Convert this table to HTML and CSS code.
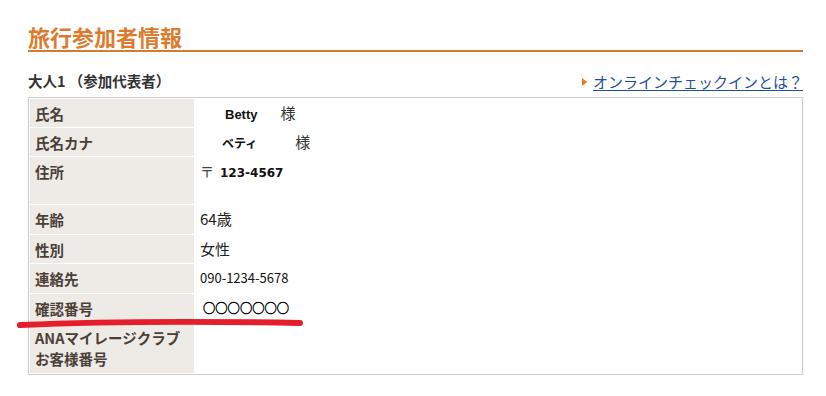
FILE: index.html
```html
<!DOCTYPE html>
<html lang="ja">
<head>
<meta charset="utf-8">
<title>旅行参加者情報</title>
<link rel="stylesheet" href="styles.css">
</head>
<body>
<div class="page">
  <h1 class="title">旅行参加者情報</h1>
  <div class="section-head">
    <h2 class="section-title">大人1 （参加代表者）</h2>
    <a class="help-link" href="#"><span class="arrow"></span><span class="link-text">オンラインチェックインとは？</span></a>
  </div>
  <table class="info">
    <tr class="r28">
      <th>氏名</th>
      <td><span class="name-latin">Betty</span><span class="sama sama-1">様</span></td>
    </tr>
    <tr class="r28">
      <th>氏名カナ</th>
      <td><span class="name-kana">ベティ</span><span class="sama sama-2">様</span></td>
    </tr>
    <tr class="r47">
      <th>住所</th>
      <td><span class="postal-mark">〒</span><span class="postal">123-4567</span></td>
    </tr>
    <tr class="r29">
      <th>年齢</th>
      <td class="v15">64歳</td>
    </tr>
    <tr class="r28">
      <th>性別</th>
      <td class="v15">女性</td>
    </tr>
    <tr class="r29">
      <th>連絡先</th>
      <td class="v13">090-1234-5678</td>
    </tr>
    <tr class="r28">
      <th>確認番号</th>
      <td class="circles">○○○○○○○</td>
    </tr>
    <tr class="r50 last">
      <th class="two-line">ANAマイレージクラブ<br>お客様番号</th>
      <td></td>
    </tr>
  </table>
  <svg class="mark" width="300" height="14" viewBox="0 0 300 14" aria-hidden="true">
    <path d="M4 8 Q120 3 284 6" fill="none" stroke="#e41e2b" stroke-width="6" stroke-linecap="round"/>
  </svg>
</div>
</body>
</html>
```
FILE: styles.css
```css
html, body {
  margin: 0;
  padding: 0;
  background: #ffffff;
}

body {
  font-family: "Noto Sans CJK JP", "Noto Sans", sans-serif;
  color: #333333;
}

.page {
  position: relative;
  width: 775px;
  padding: 22px 0 0 28px;
}

.title {
  margin: 0;
  font-size: 22px;
  line-height: 28px;
  font-weight: 700;
  color: #dc7b2c;
  border-bottom: 2px solid #d9792b;
}

.section-head {
  display: flex;
  justify-content: space-between;
  align-items: center;
  margin-top: 18px;
  height: 22px;
  margin-bottom: 5px;
}

.section-title {
  margin: 0;
  font-size: 14.5px;
  line-height: 22px;
  font-weight: 700;
  color: #333333;
}

.help-link {
  display: flex;
  align-items: center;
  text-decoration: none;
  color: #1d4f9e;
  margin-top: 2px;
}

.arrow {
  width: 0;
  height: 0;
  border-top: 4px solid transparent;
  border-bottom: 4px solid transparent;
  border-left: 5px solid #e8771e;
  margin-right: 6px;
}

.link-text {
  font-size: 15px;
  line-height: 20px;
  text-decoration: underline;
  text-underline-offset: 2px;
}

.info {
  width: 775px;
  border: 1px solid #cccccc;
  border-spacing: 0;
  padding: 1px;
  box-sizing: border-box;
}

.info th,
.info td {
  vertical-align: top;
  border-bottom: 1px solid #ffffff;
  padding: 0;
}

.info .last th,
.info .last td {
  border-bottom: none;
}

.info th {
  width: 164px;
  background: #eeeae6;
  color: #4b3f37;
  font-size: 14.5px;
  font-weight: 700;
  text-align: left;
  line-height: 20px;
  padding: 5px 0 0 5px;
  box-sizing: border-box;
}

.info td {
  padding: 4px 0 0 6px;
  font-size: 15px;
  line-height: 20px;
  color: #222222;
}

.r28 { height: 29px; }
.r29 { height: 30px; }
.r47 { height: 48px; }
.r50 { height: 50px; }

.info th.two-line {
  line-height: 21px;
  padding-top: 4px;
}

.name-latin {
  margin-left: 25px;
  font-family: "Liberation Sans", sans-serif;
  font-size: 13px;
  font-weight: 700;
  color: #111111;
}

.name-kana {
  margin-left: 22px;
  font-size: 12px;
  font-weight: 700;
  color: #111111;
}

.sama {
  font-size: 15px;
  color: #333333;
}

.sama-1 { margin-left: 23px; }
.sama-2 { margin-left: 38px; }

.postal-mark {
  font-size: 14px;
  color: #444444;
}

.postal {
  margin-left: 6px;
  font-family: "DejaVu Sans", sans-serif;
  font-size: 12px;
  font-weight: 700;
  color: #111111;
}

.info td.v13 {
  font-size: 13px;
  color: #111111;
}

.info td.circles {
  padding-left: 9px;
  font-size: 12.3px;
  color: #000000;
  -webkit-text-stroke: 0.4px #000000;
}

.mark {
  position: absolute;
  left: 16px;
  top: 317px;
}
```
